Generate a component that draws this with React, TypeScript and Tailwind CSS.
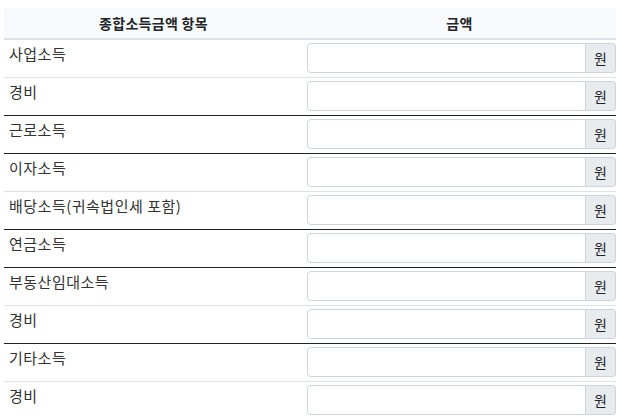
const ROWS: { label: string; dark: boolean }[] = [
  { label: '사업소득', dark: false },
  { label: '경비', dark: true },
  { label: '근로소득', dark: true },
  { label: '이자소득', dark: false },
  { label: '배당소득(귀속법인세 포함)', dark: true },
  { label: '연금소득', dark: true },
  { label: '부동산임대소득', dark: false },
  { label: '경비', dark: true },
  { label: '기타소득', dark: false },
  { label: '경비', dark: false },
];

const FONT = { fontFamily: '"Noto Sans CJK KR", "Noto Sans", sans-serif' };

function AmountInput() {
  return (
    <div className="flex h-[30px] w-[309px]">
      <input
        type="text"
        className="min-w-0 flex-1 rounded-l-[4px] border border-[#ced4da] bg-white px-2 text-[15px] outline-none"
      />
      <span className="flex w-[30px] items-center justify-center rounded-r-[4px] border border-l-0 border-[#ced4da] bg-[#e9ecef] text-[14px] text-[#212529]">
        원
      </span>
    </div>
  );
}

export default function App() {
  return (
    <div className="bg-white pl-1 pt-2 text-[#212529]" style={FONT}>
      <table className="w-[612px] border-collapse">
        <thead>
          <tr className="h-[31px] border-b-2 border-[#dee2e6] bg-[#f8f9fa]">
            <th className="w-[299px] p-0 text-center text-[14px] font-bold tracking-[0.3px]">종합소득금액 항목</th>
            <th className="p-0 text-center text-[14px] font-bold tracking-[0.3px]">금액</th>
          </tr>
        </thead>
        <tbody>
          {ROWS.map((row, i) => (
            <tr
              key={i}
              className={row.dark ? 'border-b border-[#212529]' : 'border-b border-[#dee2e6]'}
            >
              <td className="h-[37px] px-[5px] pt-[3px] align-top text-[15px] leading-[22px] tracking-[0.5px] text-[#333]">
                {row.label}
              </td>
              <td className="h-[37px] pl-1 pt-[3px] pb-[4px] align-top">
                <AmountInput />
              </td>
            </tr>
          ))}
        </tbody>
      </table>
    </div>
  );
}
